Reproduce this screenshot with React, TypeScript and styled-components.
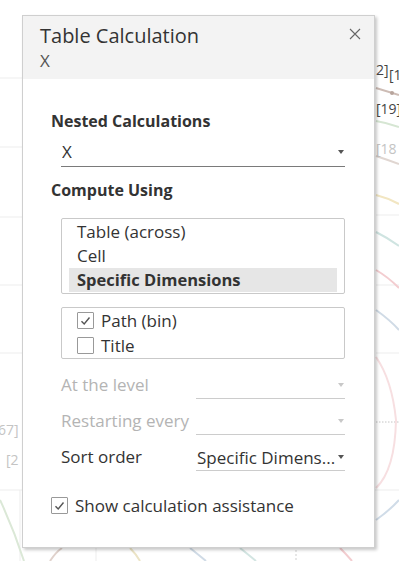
import React from 'react'
import styled, { createGlobalStyle } from 'styled-components';

const GlobalStyle = createGlobalStyle`
	html, body {
		margin: 0;
		padding: 0;
		background: #ffffff;
	}
	body {
		font-family: "Open Sans", "Noto Sans", sans-serif;
		color: #333333;
	}
`;

const Stage = styled.div`
	position: relative;
	width: 399px;
	height: 561px;
	overflow: hidden;
	background: #ffffff;
`;

const ChartLayer = styled.svg`
	position: absolute;
	left: 0;
	top: 0;
	width: 399px;
	height: 561px;
`;

const Dialog = styled.div`
	position: absolute;
	left: 22px;
	top: 15px;
	width: 351px;
	height: 531px;
	background: #ffffff;
	border: 1px solid #cfcfcf;
	box-shadow: 2px 2px 3px rgba(0, 0, 0, 0.22);
	display: flex;
	flex-direction: column;
`;

const Header = styled.div`
	position: relative;
	height: 63px;
	background: #f3f3f3;
	padding: 8px 17px 0 17px;
	box-sizing: border-box;
`;

const Title = styled.div`
	font-size: 20px;
	line-height: 24px;
	color: #333333;
`;

const Subtitle = styled.div`
	font-size: 17px;
	line-height: 20px;
	margin-top: 3px;
	color: #555555;
`;

const CloseButton = styled.button`
	position: absolute;
	right: 12px;
	top: 12px;
	width: 14px;
	height: 14px;
	padding: 0;
	border: none;
	background: transparent;
	cursor: pointer;
`;

const Body = styled.div`
	padding: 32px 29px 0 28px;
	display: flex;
	flex-direction: column;
`;

const SectionTitle = styled.div<{ $gap?: number }>`
	font-size: 16px;
	font-weight: 700;
	line-height: 20px;
	color: #333333;
	margin-top: ${p => p.$gap ?? 0}px;
`;

const Indented = styled.div`
	margin-left: 10px;
`;

const Select = styled.div<{ $disabled?: boolean; $strong?: boolean }>`
	display: flex;
	align-items: center;
	justify-content: space-between;
	height: ${p => (p.$strong ? 30 : 27)}px;
	margin-top: ${p => (p.$strong ? 6 : 0)}px;
	box-sizing: border-box;
	border-bottom: 1px solid ${p => (p.$strong ? '#7a7a7a' : '#cccccc')};
	font-size: 17px;
	color: ${p => (p.$disabled ? '#b4b4b4' : '#333333')};
	padding-left: 1px;
	min-width: 0;
`;

const SelectText = styled.span`
	white-space: nowrap;
	overflow: hidden;
`;

const Arrow = styled.span<{ $disabled?: boolean }>`
	flex: none;
	width: 0;
	height: 0;
	margin-right: 1px;
	border-left: 3.5px solid transparent;
	border-right: 3.5px solid transparent;
	border-top: 4px solid ${p => (p.$disabled ? '#c8c8c8' : '#555555')};
`;

const ListBox = styled.div`
	border: 1px solid #c9c9c9;
	border-radius: 2px;
	padding: 1px 7px 0 7px;
	height: 76px;
	box-sizing: border-box;
	margin-top: 18px;
`;

const ListItem = styled.div<{ $selected?: boolean }>`
	height: 24px;
	line-height: 24px;
	font-size: ${p => (p.$selected ? 16.5 : 17)}px;
	padding-left: 8px;
	font-weight: ${p => (p.$selected ? 700 : 400)};
	background: ${p => (p.$selected ? '#e6e6e6' : 'transparent')};
	color: #333333;
	white-space: nowrap;
`;

const CheckList = styled.div`
	border: 1px solid #c9c9c9;
	border-radius: 2px;
	padding: 0 15px;
	height: 52px;
	box-sizing: border-box;
	margin-top: 13px;
`;

const CheckRow = styled.label`
	display: flex;
	align-items: center;
	gap: 7px;
	height: 25px;
	font-size: 17px;
	color: #333333;
	white-space: nowrap;
`;

const Box = styled.span`
	flex: none;
	width: 15px;
	height: 15px;
	border: 1px solid #999999;
	border-radius: 1px;
	background: #ffffff;
	display: flex;
	align-items: center;
	justify-content: center;
`;

const OptionGrid = styled.div`
	display: grid;
	grid-template-columns: 135px 1fr;
	row-gap: 9px;
	margin-top: 13px;
	align-items: end;
`;

const OptionLabel = styled.div<{ $disabled?: boolean }>`
	font-size: 17px;
	height: 27px;
	line-height: 25px;
	color: ${p => (p.$disabled ? '#b4b4b4' : '#333333')};
	white-space: nowrap;
`;

const Footer = styled.div`
	margin-top: 22px;
`;

const Check = () => (
	<svg width="11" height="10" viewBox="0 0 11 10">
		<path d="M1.5 5.2 L4.2 8 L9.5 1.5" fill="none" stroke="#555" strokeWidth="1.4" />
	</svg>
);

type CheckItemProps = { label: string; checked?: boolean };

const CheckItem = ({ label, checked }: CheckItemProps) => (
	<CheckRow>
		<Box>{checked && <Check />}</Box>
		{label}
	</CheckRow>
);

const Chart = () => (
	<ChartLayer viewBox="0 0 399 561">
		<g stroke="#ededed" strokeWidth="1">
			<line x1="0" y1="78" x2="22" y2="78" />
			<line x1="0" y1="147" x2="22" y2="147" />
			<line x1="0" y1="217" x2="22" y2="217" />
			<line x1="0" y1="285" x2="22" y2="285" />
			<line x1="0" y1="353" x2="22" y2="353" />
			<line x1="0" y1="490" x2="399" y2="490" />
			<line x1="376" y1="215" x2="399" y2="215" />
			<line x1="376" y1="285" x2="399" y2="285" />
			<line x1="376" y1="353" x2="399" y2="353" />
			<line x1="20" y1="490" x2="20" y2="561" />
			<line x1="96" y1="490" x2="96" y2="561" />
			<line x1="296" y1="490" x2="296" y2="561" strokeDasharray="2 2" stroke="#cfcfcf" />
		</g>
		<line x1="376" y1="422" x2="399" y2="422" stroke="#c4c4c4" strokeDasharray="1.5 1.5" />
		<g fill="none" strokeWidth="2">
			<path d="M376 88 L399 95" stroke="#cdbcb5" />
			<path d="M376 121 Q388 123 399 127" stroke="#d6e6d3" />
			<path d="M376 156 Q388 160 399 164" stroke="#e0d6d1" />
			<path d="M376 195 Q388 198 399 204" stroke="#f2e6c2" />
			<path d="M376 232 Q388 238 399 246" stroke="#cfe4e1" />
			<path d="M376 270 Q388 277 399 288" stroke="#f3cdd0" />
			<path d="M376 310 Q390 320 399 330" stroke="#d0dbe6" />
			<path d="M376 357 Q392 380 396 420 Q395 470 376 488" stroke="#f7dfe1" />
			<path d="M376 520 Q390 510 399 500" stroke="#d0dce8" />
			<path d="M0 500 Q14 530 24 561" stroke="#dbe8d7" />
			<path d="M50 561 Q56 552 62 548" stroke="#e0d2cc" />
			<path d="M130 548 Q136 554 140 561" stroke="#ece4c6" />
			<path d="M190 548 Q200 556 206 561" stroke="#d0dbe6" />
			<path d="M240 548 Q250 556 256 561" stroke="#d3e5e2" />
			<path d="M340 548 Q346 554 352 561" stroke="#f3cdd0" />
		</g>
		<circle cx="392" cy="93" r="2" fill="#b7a49c" />
		<g fontFamily="'Open Sans', sans-serif" fontSize="14">
			<text x="376" y="75" fill="#444">2]</text>
			<text x="389" y="80" fill="#444">[1</text>
			<text x="376" y="114" fill="#444">[19]</text>
			<text x="376" y="154" fill="#c4c4c4">[18</text>
			<text x="-2" y="435" fill="#c4c4c4">67]</text>
			<text x="6" y="465" fill="#c4c4c4">[2</text>
		</g>
	</ChartLayer>
);

const App = () => {
	return (
		<>
			<GlobalStyle />
			<Stage>
				<Chart />
				<Dialog>
					<Header>
						<Title>Table Calculation</Title>
						<Subtitle>X</Subtitle>
						<CloseButton aria-label="Close">
							<svg width="12" height="12" viewBox="0 0 12 12">
								<path d="M1 1 L11 11 M11 1 L1 11" stroke="#666" strokeWidth="1.1" />
							</svg>
						</CloseButton>
					</Header>
					<Body>
						<SectionTitle>Nested Calculations</SectionTitle>
						<Indented>
							<Select $strong>
								<SelectText>X</SelectText>
								<Arrow />
							</Select>
						</Indented>
						<SectionTitle $gap={13}>Compute Using</SectionTitle>
						<Indented>
							<ListBox>
								<ListItem>Table (across)</ListItem>
								<ListItem>Cell</ListItem>
								<ListItem $selected>Specific Dimensions</ListItem>
							</ListBox>
							<CheckList>
								<CheckItem label="Path (bin)" checked />
								<CheckItem label="Title" />
							</CheckList>
							<OptionGrid>
								<OptionLabel $disabled>At the level</OptionLabel>
								<Select $disabled>
									<SelectText />
									<Arrow $disabled />
								</Select>
								<OptionLabel $disabled>Restarting every</OptionLabel>
								<Select $disabled>
									<SelectText />
									<Arrow $disabled />
								</Select>
								<OptionLabel>Sort order</OptionLabel>
								<Select>
									<SelectText>Specific Dimens...</SelectText>
									<Arrow />
								</Select>
							</OptionGrid>
						</Indented>
						<Footer>
							<CheckItem label="Show calculation assistance" checked />
						</Footer>
					</Body>
				</Dialog>
			</Stage>
		</>
	)
}

export default App
